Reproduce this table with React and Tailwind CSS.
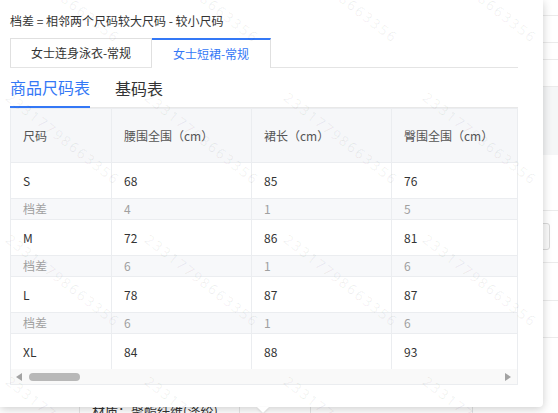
import React from "react";

const rows = [
  { size: "S", v: ["68", "85", "76"], d: ["4", "1", "5"] },
  { size: "M", v: ["72", "86", "81"], d: ["6", "1", "6"] },
  { size: "L", v: ["78", "87", "87"], d: ["6", "1", "6"] },
  { size: "XL", v: ["84", "88", "93"] },
];

const headers = ["尺码", "腰围全围（cm）", "裙长（cm）", "臀围全围（cm）", "衣长（cm）"];
const widths = ["w-[101px]", "w-[140px]", "w-[140px]", "w-[140px]", "w-[140px]"];

function Cell({ i, children, className = "" }) {
  return (
    <div className={`${widths[i]} shrink-0 border-r border-[#ebedf0] pl-[12px] flex items-center ${className}`}>
      {children}
    </div>
  );
}

export default function App() {
  const marks = [];
  for (let r = -1; r < 4; r++) {
    for (let c = 0; c < 4; c++) {
      marks.push({ x: 12 + 139 * c, y: 90 + 142 * r });
    }
  }

  return (
    <div className="relative w-[558px] h-[413px] overflow-hidden bg-white font-['Noto_Sans_CJK_SC',sans-serif]">
      {/* background page */}
      <div className="flex flex-col">
        <div className="h-[16px] border-b border-[#ebebeb]" />
        <div className="h-[27px] border-b border-[#ebebeb]" />
        <div className="h-[17px] border-b border-[#ebebeb]" />
        <div className="h-[27px] border-b border-[#ebebeb]" />
        <div className="h-[68px] bg-[#f5f6f7]" />
        <div className="h-[56px] border-b border-[#ebebeb]" />
        <div className="h-[52px] border-b border-[#ebebeb] pt-[12px]">
          <div className="w-[550px] h-[27px] border border-[#d9d9d9] rounded-[3px] bg-[#fafafa]" />
        </div>
        <div className="h-[38px] border-b border-[#ebebeb]" />
        <div className="h-[37px] border-b border-[#ebebeb]" />
        <div className="h-[62px]" />
        <div className="flex h-[20px] text-[13px] leading-[16px] text-[#333]">
          <div className="w-[79px]" />
          <div className="w-[160px] border-l border-[#e5e5e5] pl-[12px] pt-[3px]">材质：聚酯纤维(涤纶)</div>
          <div className="w-[71px] border-l border-[#e5e5e5]" />
          <div className="w-[162px] border-l border-[#e5e5e5]" />
          <div className="flex-1 border-l border-[#e5e5e5]" />
        </div>
      </div>

      {/* popover */}
      <div className="absolute left-0 top-0 w-[543px] h-[407px] bg-white rounded-br-[4px] shadow-[0_2px_10px_rgba(0,0,0,0.2)] pl-[10px] pr-[25px]">
        <div className="pt-[13px] text-[12px] leading-[16px] text-[#333]">
          档差 = 相邻两个尺码较大尺码 - 较小尺码
        </div>

        <div className="mt-[9px] flex items-end h-[30px] border-b border-[#e4e4e4]">
          <div className="w-[142px] h-[29px] border-l border-t border-r border-[#e0e0e0] flex items-center justify-center text-[12px] text-[#333]">
            女士连身泳衣-常规
          </div>
          <div className="w-[119px] h-[30px] -mb-px bg-white border-t-2 border-t-[#3478f6] border-r border-r-[#e0e0e0] flex items-center justify-center text-[12px] text-[#3478f6]">
            女士短裙-常规
          </div>
        </div>

        <div className="flex h-[40px] border-b border-[#e8e8e8] text-[16px] gap-[25px]">
          <div className="-mb-px border-b-2 border-[#3478f6] text-[#3478f6] flex items-center">商品尺码表</div>
          <div className="text-[#333] flex items-center">基码表</div>
        </div>

        {/* table */}
        <div className="w-[508px] border border-[#ebedf0] overflow-hidden text-[12px]">
          <div className="w-[2000px]">
            <div className="flex h-[54px] border-b border-[#ebedf0] bg-[#f6f7f9] text-[#555]">
              {headers.map((h, i) => (
                <Cell key={i} i={i}>{h}</Cell>
              ))}
            </div>
            {rows.map((r, ri) => (
              <React.Fragment key={r.size}>
                <div className={`flex text-[#333] ${ri === rows.length - 1 ? "h-[35px]" : "h-[36px] border-b border-[#ebedf0]"}`}>
                  <Cell i={0}>{r.size}</Cell>
                  {r.v.map((v, i) => (
                    <Cell key={i} i={i + 1}>{v}</Cell>
                  ))}
                  <Cell i={4}>{""}</Cell>
                </div>
                {r.d && (
                  <div className="flex h-[21px] border-b border-[#ebedf0] bg-[#f7f8fa] text-[#a0a0a0]">
                    <Cell i={0}>档差</Cell>
                    {r.d.map((v, i) => (
                      <Cell key={i} i={i + 1}>{v}</Cell>
                    ))}
                    <Cell i={4}>{""}</Cell>
                  </div>
                )}
              </React.Fragment>
            ))}
          </div>
          {/* scrollbar */}
          <div className="h-[15px] bg-[#f9f9f9] flex items-center pl-[4px] pr-[5px]">
            <svg width="7" height="8" viewBox="0 0 7 8" className="shrink-0">
              <polygon points="7,0 7,8 1,4" fill="#a3a3a3" />
            </svg>
            <div className="ml-[7px] w-[51px] h-[8px] rounded-full bg-[#b8b8b8]" />
            <div className="flex-1" />
            <svg width="7" height="8" viewBox="0 0 7 8" className="shrink-0">
              <polygon points="0,0 0,8 6,4" fill="#a3a3a3" />
            </svg>
          </div>
        </div>
      </div>

      {/* arrow */}
      <div className="absolute left-[257px] top-[407px] w-0 h-0 border-l-[6px] border-r-[6px] border-t-[6px] border-l-transparent border-r-transparent border-t-white drop-shadow-[0_1px_1px_rgba(0,0,0,0.12)]" />

      {/* watermark */}
      <div className="absolute inset-0 pointer-events-none overflow-hidden">
        {marks.map((m, i) => (
          <span
            key={i}
            className="absolute origin-top-left rotate-[38deg] text-[14px] leading-[14px] tracking-[2px] text-[rgba(0,0,0,0.06)] whitespace-nowrap font-['Noto_Sans',sans-serif]"
            style={{ left: m.x, top: m.y }}
          >
            23317798663356
          </span>
        ))}
      </div>
    </div>
  );
}
